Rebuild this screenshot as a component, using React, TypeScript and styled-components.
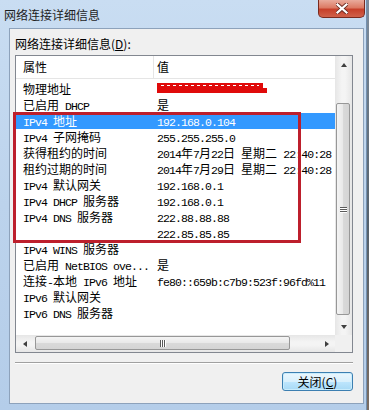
import React from "react";
import styled, { createGlobalStyle } from "styled-components";

const GlobalStyle = createGlobalStyle`
  html, body {
    margin: 0;
    padding: 0;
  }
  body {
    width: 369px;
    height: 410px;
    overflow: hidden;
    background: #5d6d7e;
    font-family: "Noto Sans CJK SC", "Noto Sans", sans-serif;
    font-size: 12px;
    color: #000;
  }
`;

const Screen = styled.div`
  display: flex;
  width: 369px;
  height: 410px;
`;

const Backdrop = styled.div`
  flex: 1;
  background: linear-gradient(180deg, #7d8c9c 0%, #55616d 55%, #7b6d62 100%);
`;

const Window = styled.div`
  width: 367px;
  height: 410px;
  box-sizing: border-box;
  display: flex;
  flex-direction: column;
  background: linear-gradient(180deg, #c9ddf2 0%, #bcd3ec 50%, #b4cde9 100%);
  border-right: 1px solid #7390b0;
`;

const TitleBar = styled.div`
  height: 28px;
  display: flex;
  align-items: flex-start;
`;

const Title = styled.div`
  padding: 8px 0 0 4px;
  line-height: 14px;
  color: #1e1e1e;
`;

const CloseButton = styled.div`
  margin-left: auto;
  margin-right: 1px;
  width: 47px;
  height: 18px;
  box-sizing: border-box;
  border: 1px solid #7a2a1e;
  border-top: none;
  border-radius: 0 0 5px 5px;
  background: linear-gradient(180deg, #e9ab9c 0%, #dc7a64 45%, #c7402a 55%, #d0614a 100%);
  display: flex;
  align-items: center;
  justify-content: center;
`;

const Panel = styled.div`
  position: relative;
  margin: 0 2px 0 9px;
  height: 376px;
  box-sizing: border-box;
  border: 1px solid #8da2bb;
  background: #f0f0f0;
  padding: 8px 0 0 5px;
  display: flex;
  flex-direction: column;
`;

const Label = styled.div`
  height: 14px;
  line-height: 14px;
  margin-bottom: 4px;
`;

const ListFrame = styled.div`
  position: relative;
  width: 338px;
  height: 298px;
  box-sizing: border-box;
  border: 1px solid #828790;
  background: #fff;
  display: grid;
  grid-template-columns: 319px 17px;
  grid-template-rows: 279px 17px;
`;

const Content = styled.div`
  overflow: hidden;
`;

const Header = styled.div`
  height: 23px;
  box-sizing: border-box;
  border-bottom: 1px solid #e5e5e5;
  display: flex;
  line-height: 22px;
`;

const HeaderCell = styled.div<{ $first?: boolean }>`
  width: ${(p) => (p.$first ? "138px" : "auto")};
  box-sizing: border-box;
  padding-left: ${(p) => (p.$first ? "7px" : "3px")};
  border-right: ${(p) => (p.$first ? "1px solid #e5e5e5" : "none")};
`;

const Rows = styled.div`
  padding-top: 2px;
`;

const Row = styled.div<{ $selected?: boolean }>`
  display: flex;
  height: 16px;
  line-height: 16px;
  white-space: pre;
  background: ${(p) => (p.$selected ? "#3399ff" : "transparent")};
  color: ${(p) => (p.$selected ? "#fff" : "#000")};
`;

const NameCell = styled.div`
  width: 138px;
  flex: none;
  box-sizing: border-box;
  padding-left: 7px;
  overflow: hidden;
`;

const ValueCell = styled.div`
  padding-left: 3px;
`;

const Latin = styled.span`
  font-family: "Liberation Mono", monospace;
  font-size: 11.5px;
  letter-spacing: -0.9px;
`;

const VScroll = styled.div`
  display: flex;
  flex-direction: column;
  background: linear-gradient(90deg, #e6e6e6 0%, #f4f4f4 40%, #f4f4f4 60%, #e6e6e6 100%);
`;

const HScroll = styled.div`
  display: flex;
  background: linear-gradient(180deg, #e6e6e6 0%, #f4f4f4 40%, #f4f4f4 60%, #e6e6e6 100%);
`;

const Corner = styled.div`
  background: #f0f0f0;
`;

const ArrowBox = styled.div`
  width: 17px;
  height: 17px;
  flex: none;
  display: flex;
  align-items: center;
  justify-content: center;
`;

const Arrow = styled.div<{ $dir: "up" | "down" | "left" | "right" }>`
  width: 0;
  height: 0;
  border: 4px solid transparent;
  ${(p) =>
    p.$dir === "up"
      ? "border-bottom-color: #404040; border-top-width: 0; border-left-width: 3.5px; border-right-width: 3.5px;"
      : p.$dir === "down"
      ? "border-top-color: #404040; border-bottom-width: 0; border-left-width: 3.5px; border-right-width: 3.5px;"
      : p.$dir === "left"
      ? "border-right-color: #404040; border-left-width: 0; border-top-width: 3.5px; border-bottom-width: 3.5px;"
      : "border-left-color: #404040; border-right-width: 0; border-top-width: 3.5px; border-bottom-width: 3.5px;"}
`;

const VTrack = styled.div`
  flex: 1;
  padding-top: 30px;
`;

const HTrack = styled.div`
  flex: 1;
  padding-left: 2px;
`;

const VThumb = styled.div`
  margin: 0 2px 0 1px;
  height: 212px;
  box-sizing: border-box;
  border: 1px solid #979797;
  border-radius: 2px;
  background: linear-gradient(90deg, #f4f4f4 0%, #e8e8e8 50%, #d9d9d9 51%, #d4d4d4 100%);
  display: flex;
  flex-direction: column;
  align-items: center;
  justify-content: center;
  gap: 1px;
`;

const HThumb = styled.div`
  margin: 1px 0 2px 0;
  width: 255px;
  height: 14px;
  box-sizing: border-box;
  border: 1px solid #979797;
  border-radius: 2px;
  background: linear-gradient(180deg, #f4f4f4 0%, #e8e8e8 50%, #d9d9d9 51%, #d4d4d4 100%);
  display: flex;
  align-items: center;
  justify-content: center;
  gap: 1px;
`;

const GripLine = styled.div<{ $horizontal?: boolean }>`
  width: ${(p) => (p.$horizontal ? "7px" : "1px")};
  height: ${(p) => (p.$horizontal ? "1px" : "7px")};
  background: #5a5a5a;
  box-shadow: ${(p) => (p.$horizontal ? "0 1px 0 #fff" : "1px 0 0 #fff")};
`;

const Separator = styled.div`
  margin-top: 9px;
  width: 338px;
  border-top: 1px solid #a0a0a0;
  border-bottom: 1px solid #fff;
`;

const ButtonRow = styled.div`
  width: 338px;
  margin-top: 8px;
  display: flex;
  justify-content: flex-end;
`;

const Button = styled.div`
  width: 71px;
  height: 19px;
  box-sizing: border-box;
  border: 1px solid #3c7fb1;
  border-radius: 3px;
  background: linear-gradient(180deg, #eaf6fd 0%, #d9f0fc 50%, #bee6fd 51%, #a7d9f5 100%);
  box-shadow: inset 0 0 0 1px #c9ecfc;
  display: flex;
  align-items: center;
  justify-content: center;
  line-height: 16px;
`;

const Highlight = styled.div`
  position: absolute;
  left: -3px;
  top: 56px;
  width: 288px;
  height: 131px;
  box-sizing: border-box;
  border: 3px solid #bd1f2c;
  pointer-events: none;
`;

const Txt = ({ s }: { s: string }) => (
  <>
    {s.split(/([\x00-\x7F]+)/).map((part, i) =>
      part === "" ? null : /^[\x00-\x7F]+$/.test(part) ? (
        <Latin key={i}>{part}</Latin>
      ) : (
        <span key={i}>{part}</span>
      )
    )}
  </>
);

const Redacted = () => (
  <svg width="112" height="12" viewBox="0 0 112 12" style={{ display: "block", marginTop: 1 }}>
    <path d="M0 1 L106 1 L106 6 L110 6 L110 11 L0 11 Z" fill="#e00a0a" />
    <line x1="4" y1="3.5" x2="102" y2="3.5" stroke="#fff" strokeWidth="1" strokeDasharray="3 3" />
  </svg>
);

const rows: { name: string; value: string | null; selected?: boolean }[] = [
  { name: "物理地址", value: null },
  { name: "已启用 DHCP", value: "是" },
  { name: "IPv4 地址", value: "192.168.0.104", selected: true },
  { name: "IPv4 子网掩码", value: "255.255.255.0" },
  { name: "获得租约的时间", value: "2014年7月22日 星期二 22:40:28" },
  { name: "租约过期的时间", value: "2014年7月29日 星期二 22:40:28" },
  { name: "IPv4 默认网关", value: "192.168.0.1" },
  { name: "IPv4 DHCP 服务器", value: "192.168.0.1" },
  { name: "IPv4 DNS 服务器", value: "222.88.88.88" },
  { name: "", value: "222.85.85.85" },
  { name: "IPv4 WINS 服务器", value: "" },
  { name: "已启用 NetBIOS ove...", value: "是" },
  { name: "连接-本地 IPv6 地址", value: "fe80::659b:c7b9:523f:96fd%11" },
  { name: "IPv6 默认网关", value: "" },
  { name: "IPv6 DNS 服务器", value: "" },
];

export default function App() {
  return (
    <>
      <GlobalStyle />
      <Screen>
        <Window>
          <TitleBar>
            <Title>网络连接详细信息</Title>
            <CloseButton>
              <svg width="12" height="11" viewBox="0 0 12 11">
                <path
                  d="M1 1 L11 10 M11 1 L1 10"
                  stroke="#6a2a20"
                  strokeWidth="4"
                  strokeLinecap="square"
                />
                <path
                  d="M1.5 1.5 L10.5 9.5 M10.5 1.5 L1.5 9.5"
                  stroke="#fff"
                  strokeWidth="2.2"
                  strokeLinecap="square"
                />
              </svg>
            </CloseButton>
          </TitleBar>
          <Panel>
            <Label>
              网络连接详细信息(<u>D</u>):
            </Label>
            <ListFrame>
              <Content>
                <Header>
                  <HeaderCell $first>属性</HeaderCell>
                  <HeaderCell>值</HeaderCell>
                </Header>
                <Rows>
                  {rows.map((r, i) => (
                    <Row key={i} $selected={r.selected}>
                      <NameCell>
                        <Txt s={r.name} />
                      </NameCell>
                      <ValueCell>
                        {r.value === null ? <Redacted /> : <Txt s={r.value} />}
                      </ValueCell>
                    </Row>
                  ))}
                </Rows>
              </Content>
              <VScroll>
                <ArrowBox>
                  <Arrow $dir="up" />
                </ArrowBox>
                <VTrack>
                  <VThumb>
                    <GripLine $horizontal />
                    <GripLine $horizontal />
                    <GripLine $horizontal />
                  </VThumb>
                </VTrack>
                <ArrowBox>
                  <Arrow $dir="down" />
                </ArrowBox>
              </VScroll>
              <HScroll>
                <ArrowBox>
                  <Arrow $dir="left" />
                </ArrowBox>
                <HTrack>
                  <HThumb>
                    <GripLine />
                    <GripLine />
                    <GripLine />
                  </HThumb>
                </HTrack>
                <ArrowBox>
                  <Arrow $dir="right" />
                </ArrowBox>
              </HScroll>
              <Corner />
              <Highlight />
            </ListFrame>
            <Separator />
            <ButtonRow>
              <Button>
                关闭(<u>C</u>)
              </Button>
            </ButtonRow>
          </Panel>
        </Window>
        <Backdrop />
      </Screen>
    </>
  );
}
